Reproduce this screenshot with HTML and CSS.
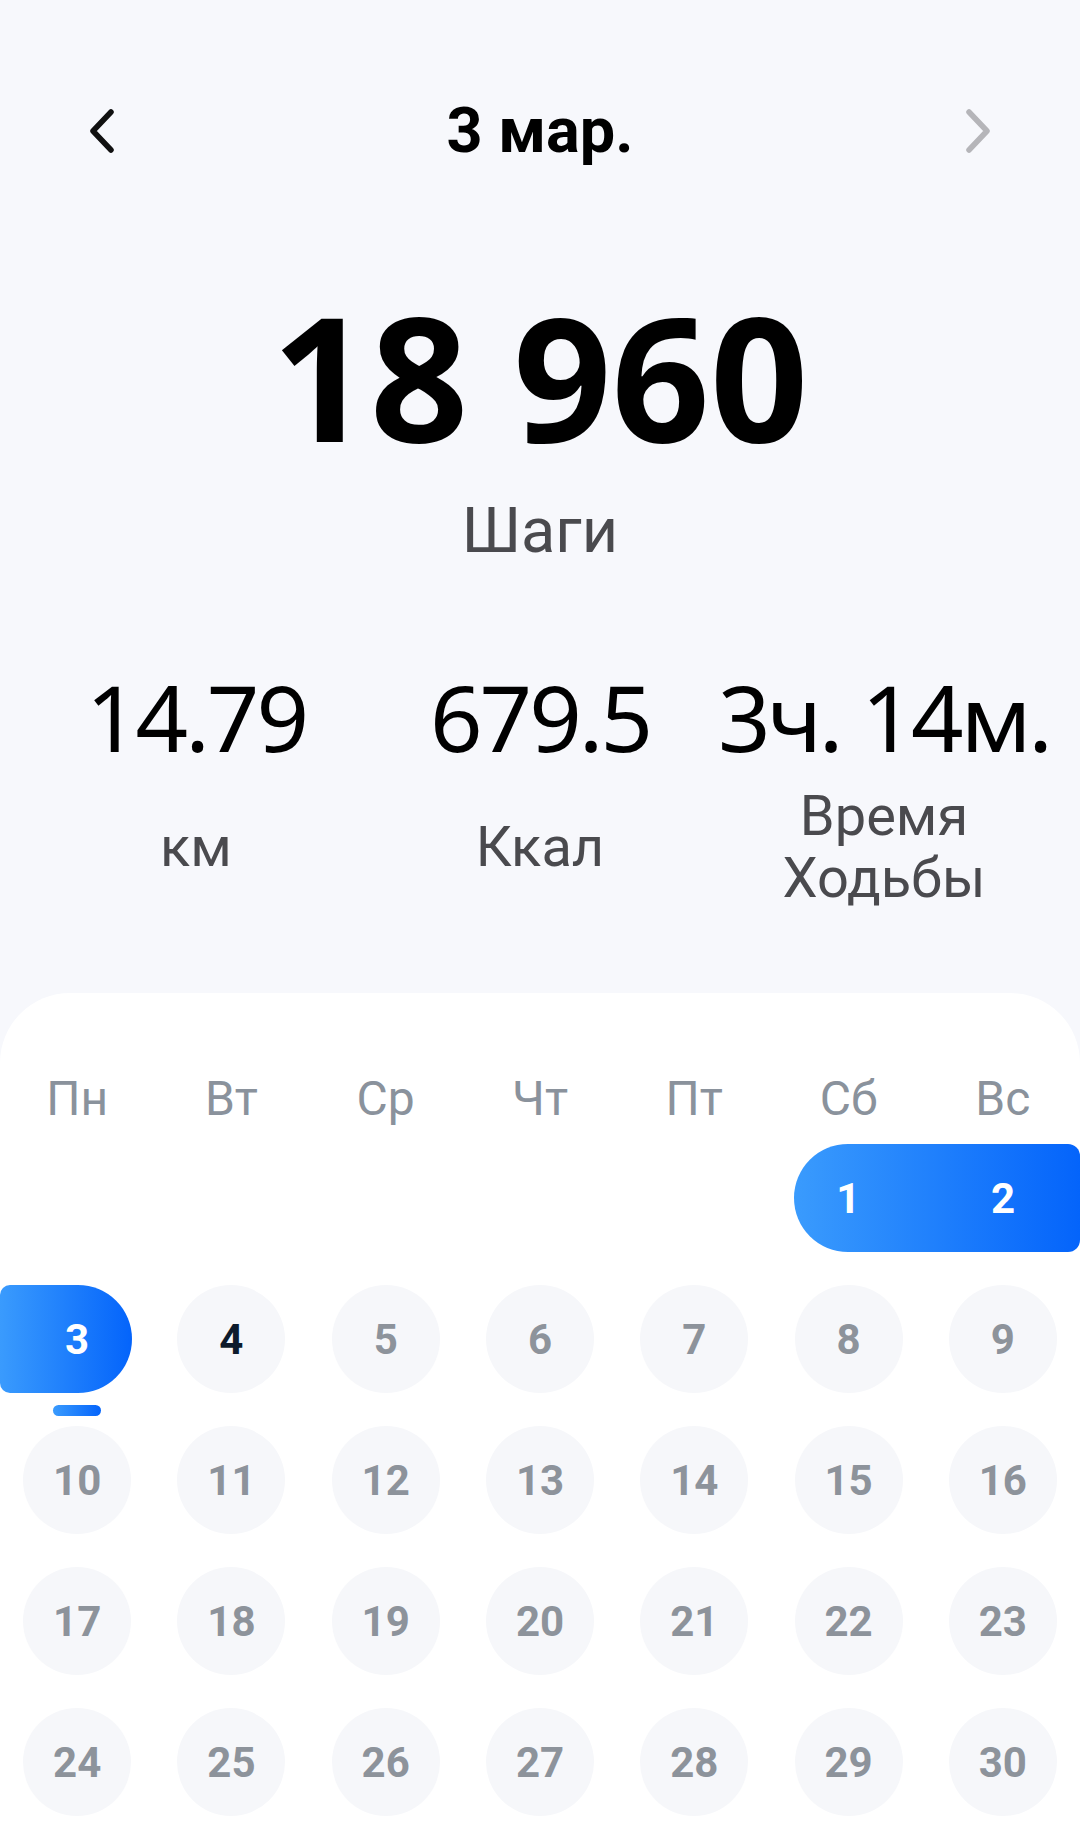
FILE: index.html
```html
<!DOCTYPE html>
<html lang="ru">
<head>
    <meta charset="UTF-8">
    <meta name="viewport" content="width=device-width, initial-scale=1.0">
    <title>Шаги</title>
    <link rel="stylesheet" href="styles.css">
</head>
<body>
    <div class="nav">
        <svg class="chevron" viewBox="0 0 28 44" width="28" height="44">
            <polyline points="23,3 5,22 23,41" />
        </svg>
        <div class="nav-title">3 мар.</div>
        <svg class="chevron chevron-off" viewBox="0 0 28 44" width="28" height="44">
            <polyline points="5,3 23,22 5,41" />
        </svg>
    </div>

    <div class="steps">18 960</div>
    <div class="steps-label">Шаги</div>

    <div class="stats">
        <div class="stat">
            <div class="stat-value">14.79</div>
            <div class="stat-label">км</div>
        </div>
        <div class="stat">
            <div class="stat-value">679.5</div>
            <div class="stat-label">Ккал</div>
        </div>
        <div class="stat">
            <div class="stat-value">3ч. 14м.</div>
            <div class="stat-label">Время<br>Ходьбы</div>
        </div>
    </div>

    <div class="calendar">
        <div class="weekdays">
            <span>Пн</span><span>Вт</span><span>Ср</span><span>Чт</span><span>Пт</span><span>Сб</span><span>Вс</span>
        </div>
        <div class="days">
            <div class="range">
                <span class="range-day">1</span>
                <span class="range-day range-day-last">2</span>
            </div>
            <div class="day day-selected"><span>3</span></div>
            <div class="day day-next">4</div>
            <div class="day">5</div>
            <div class="day">6</div>
            <div class="day">7</div>
            <div class="day">8</div>
            <div class="day">9</div>
            <div class="day">10</div>
            <div class="day">11</div>
            <div class="day">12</div>
            <div class="day">13</div>
            <div class="day">14</div>
            <div class="day">15</div>
            <div class="day">16</div>
            <div class="day">17</div>
            <div class="day">18</div>
            <div class="day">19</div>
            <div class="day">20</div>
            <div class="day">21</div>
            <div class="day">22</div>
            <div class="day">23</div>
            <div class="day">24</div>
            <div class="day">25</div>
            <div class="day">26</div>
            <div class="day">27</div>
            <div class="day">28</div>
            <div class="day">29</div>
            <div class="day">30</div>
        </div>
    </div>
</body>
</html>
```

FILE: styles.css
```css
body {
    margin: 0;
    padding: 0;
    background-color: #f7f8fc;
    font-family: Roboto, "Noto Sans", sans-serif;
    color: #000;
    overflow: hidden;
}

.nav {
    display: flex;
    align-items: center;
    justify-content: space-between;
    padding: 93px 88px 0 88px;
    height: 76px;
}

.nav-title {
    font-size: 63px;
    font-weight: bold;
    line-height: 76px;
}

.chevron polyline {
    fill: none;
    stroke: #111;
    stroke-width: 5.5;
    stroke-linecap: round;
    stroke-linejoin: round;
}

.chevron-off polyline {
    stroke: #b5b5b9;
}

.steps {
    margin-top: 120px;
    font-family: "Noto Sans", sans-serif;
    font-size: 172px;
    font-weight: bold;
    line-height: 172px;
    text-align: center;
}

.steps-label {
    margin-top: 32px;
    font-size: 63px;
    line-height: 76px;
    text-align: center;
    color: #4a4a4e;
}

.stats {
    display: grid;
    grid-template-columns: repeat(3, 1fr);
    padding: 0 24px;
    margin-top: 102px;
}

.stat {
    text-align: center;
}

.stat-value {
    font-family: "Noto Sans", sans-serif;
    font-size: 92px;
    line-height: 92px;
    letter-spacing: -3px;
    white-space: nowrap;
}

.stat-label {
    display: flex;
    align-items: center;
    justify-content: center;
    height: 124px;
    margin-top: 22px;
    font-size: 56px;
    line-height: 62px;
    color: #4a4a4e;
}

.calendar {
    margin-top: 84px;
    background-color: #fff;
    border-radius: 70px 70px 0 0;
    padding-top: 77px;
    min-height: 900px;
}

.weekdays {
    display: grid;
    grid-template-columns: repeat(7, 1fr);
    text-align: center;
    font-size: 48px;
    line-height: 58px;
    color: #8a929c;
}

.days {
    display: grid;
    grid-template-columns: repeat(7, 1fr);
    grid-auto-rows: 108px;
    row-gap: 33px;
    margin-top: 16px;
}

.day {
    justify-self: center;
    width: 108px;
    height: 108px;
    border-radius: 50%;
    background-color: #f6f7fa;
    display: flex;
    align-items: center;
    justify-content: center;
    font-size: 42px;
    font-weight: bold;
    color: #8d939b;
}

.day-next {
    color: #0d1b2c;
}

.range {
    grid-column: 6 / span 2;
    margin-left: 23px;
    display: flex;
    align-items: center;
    border-radius: 54px 12px 12px 54px;
    background: linear-gradient(90deg, #3a9bfd, #0464fb);
    font-size: 42px;
    font-weight: bold;
    color: #fff;
}

.range-day {
    width: 108px;
    text-align: center;
}

.range-day-last {
    width: 154px;
    margin-left: auto;
}

.day-selected {
    position: relative;
    justify-self: start;
    width: 110px;
    padding-left: 22px;
    border-radius: 10px 54px 54px 10px;
    background: linear-gradient(90deg, #3a9bfd, #0464fb);
    color: #fff;
}

.day-selected::after {
    content: "";
    position: absolute;
    left: 53px;
    bottom: -23px;
    width: 48px;
    height: 11px;
    border-radius: 6px;
    background: linear-gradient(90deg, #3a9bfd, #0464fb);
}
```
